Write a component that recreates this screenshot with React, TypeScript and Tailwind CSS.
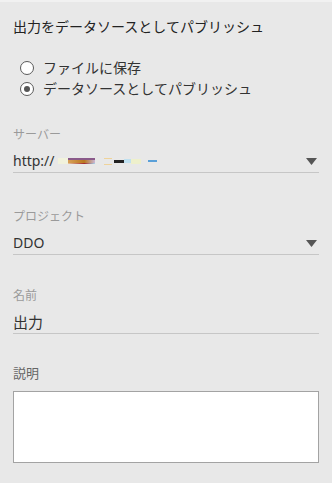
import React from "react";

const font = "font-['Noto_Sans','Noto_Sans_CJK_JP',sans-serif]";

const Caret = () => (
  <svg width="11" height="7" viewBox="0 0 11 7" className="shrink-0">
    <path d="M0 0 H11 L5.5 7 Z" fill="#555555" />
  </svg>
);

const Radio = ({ checked, label }: { checked?: boolean; label: string }) => (
  <label className="flex h-[21px] items-center">
    <span className="ml-[7px] flex h-[14px] w-[14px] items-center justify-center rounded-full border-[1.5px] border-[#5a5a5a] bg-white">
      {checked && <span className="h-[6px] w-[6px] rounded-full bg-[#555555]" />}
    </span>
    <span className="ml-[9px] text-[14px] leading-[21px] text-[#333333]">{label}</span>
  </label>
);

const Redacted = () => (
  <span className="ml-[3px] flex h-[22px] items-center">
    <span className="h-[6px] w-[10px] bg-[#f1f2dc]" />
    <span className="flex h-[6px] w-[27px] flex-col">
      <span className="h-[2px] bg-[#8a5a8a]" />
      <span className="h-[3px] bg-[linear-gradient(90deg,#d8a058,#b9781f_60%,#c9b6d6)]" />
      <span className="h-[1px] bg-[linear-gradient(90deg,#e5c69a,#a52a2a_60%,#a8d6ee)]" />
    </span>
    <span className="ml-[9px] flex h-[7px] w-[8px] flex-col justify-between">
      <span className="h-[1px] bg-[#efd39a]" />
      <span className="h-[1px] bg-[#efd39a]" />
    </span>
    <span className="ml-[2px] h-[3px] w-[10px] bg-[#222222]" />
    <span className="h-[4px] w-[7px] bg-[#bfe0f0]" />
    <span className="h-[5px] w-[10px] bg-[#eef0cc]" />
    <span className="ml-[7px] h-[2px] w-[9px] bg-[#5aa0d8]" />
  </span>
);

const Field = ({
  label,
  children,
  caret,
  className = "",
}: {
  label: string;
  children: React.ReactNode;
  caret?: boolean;
  className?: string;
}) => (
  <div className={className}>
    <div className="h-4 text-[12px] leading-4 text-[#9a9a9a]">{label}</div>
    <div className="mt-[7px] flex h-[22px] items-center justify-between border-b border-[#c6c6c6] pr-[2px] box-content">
      <div className="flex items-center text-[14px] leading-[20px] text-[#333333]">{children}</div>
      {caret && <Caret />}
    </div>
  </div>
);

export default function App() {
  return (
    <div className={`h-[483px] w-[332px] border-t-2 border-[#f1f1f1] bg-[#e8e8e8] ${font}`}>
      <div className="px-[13px] pt-[15px]">
        <h1 className="text-[14px] leading-[20px] text-[#222222]">出力をデータソースとしてパブリッシュ</h1>

        <div className="mt-[20px] flex flex-col">
          <Radio label="ファイルに保存" />
          <Radio checked label="データソースとしてパブリッシュ" />
        </div>

        <Field label="サーバー" caret className="mt-[28px]">
          <span>http://</span>
          <Redacted />
        </Field>

        <Field label="プロジェクト" caret className="mt-[36px]">
          DDO
        </Field>

        <Field label="名前" className="mt-[33px]">
          <span className="text-[15px]">出力</span>
        </Field>

        <div className="mt-[31px]">
          <div className="h-4 text-[13px] leading-4 text-[#666666]">説明</div>
          <textarea className="mt-[10px] block h-[72px] w-full resize-none border border-[#a3a3a3] bg-white outline-none" />
        </div>
      </div>
    </div>
  );
}
